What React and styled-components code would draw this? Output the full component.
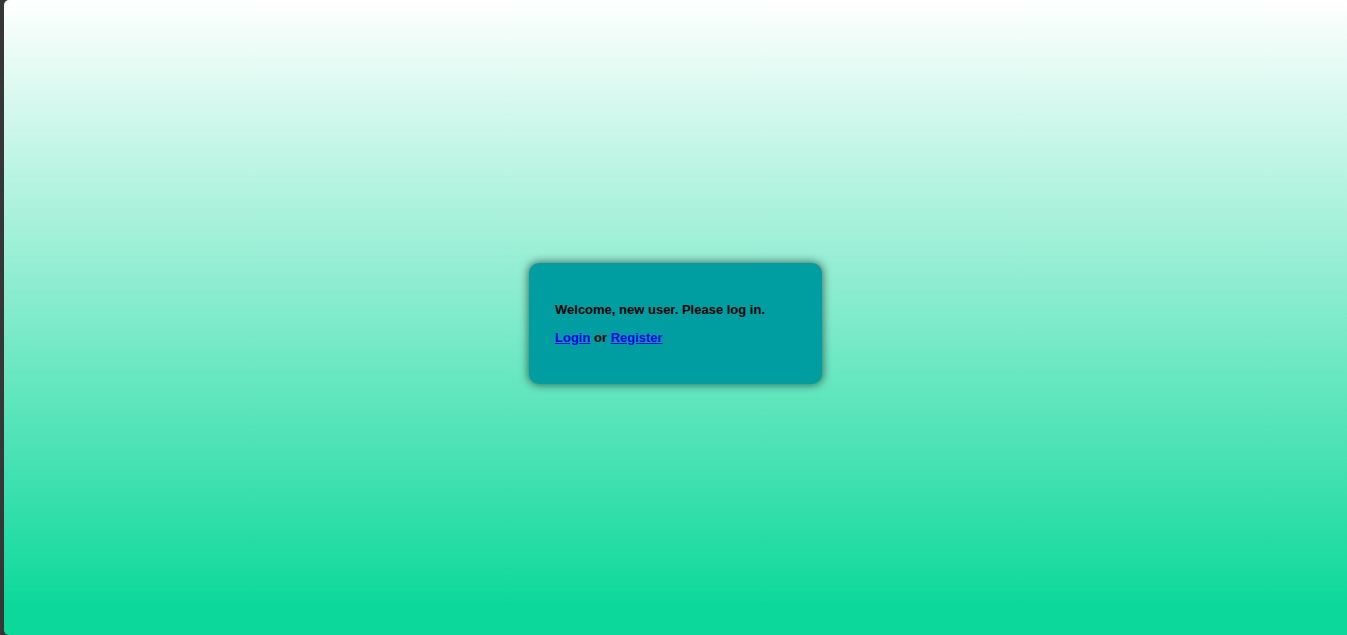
import React from 'react';
import styled, { createGlobalStyle } from 'styled-components';

const GlobalStyle = createGlobalStyle`
  html, body {
    margin: 0;
    padding: 0;
    background: #363636;
  }
  body {
    font-family: "Liberation Sans", Arial, sans-serif;
  }
`;

const Frame = styled.div`
  display: flex;
  height: 635px;
  padding-left: 4px;
  box-sizing: border-box;
`;

const Page = styled.main`
  flex: 1;
  display: flex;
  align-items: center;
  justify-content: center;
  background: linear-gradient(to bottom, #ffffff 0%, #0bd89a 96%, #0bd89a 100%);
  border-radius: 5px 0 0 5px;
`;

const Card = styled.section`
  width: 293px;
  box-sizing: border-box;
  padding: 26px;
  margin-top: 11px;
  background: #009ea0;
  border-radius: 10px;
  box-shadow: 0 0 9px 1px rgba(0, 0, 0, 0.55);
`;

const Line = styled.p`
  margin: 13px 0;
  font-size: 13px;
  font-weight: bold;
  line-height: 15px;
  color: #000;
`;

const Link = styled.a`
  color: #0000ee;
  text-decoration: underline;
`;

export default function App() {
  return (
    <>
      <GlobalStyle />
      <Frame>
        <Page>
          <Card>
            <Line>Welcome, new user. Please log in.</Line>
            <Line>
              <Link href="#login">Login</Link> or <Link href="#register">Register</Link>
            </Line>
          </Card>
        </Page>
      </Frame>
    </>
  );
}
